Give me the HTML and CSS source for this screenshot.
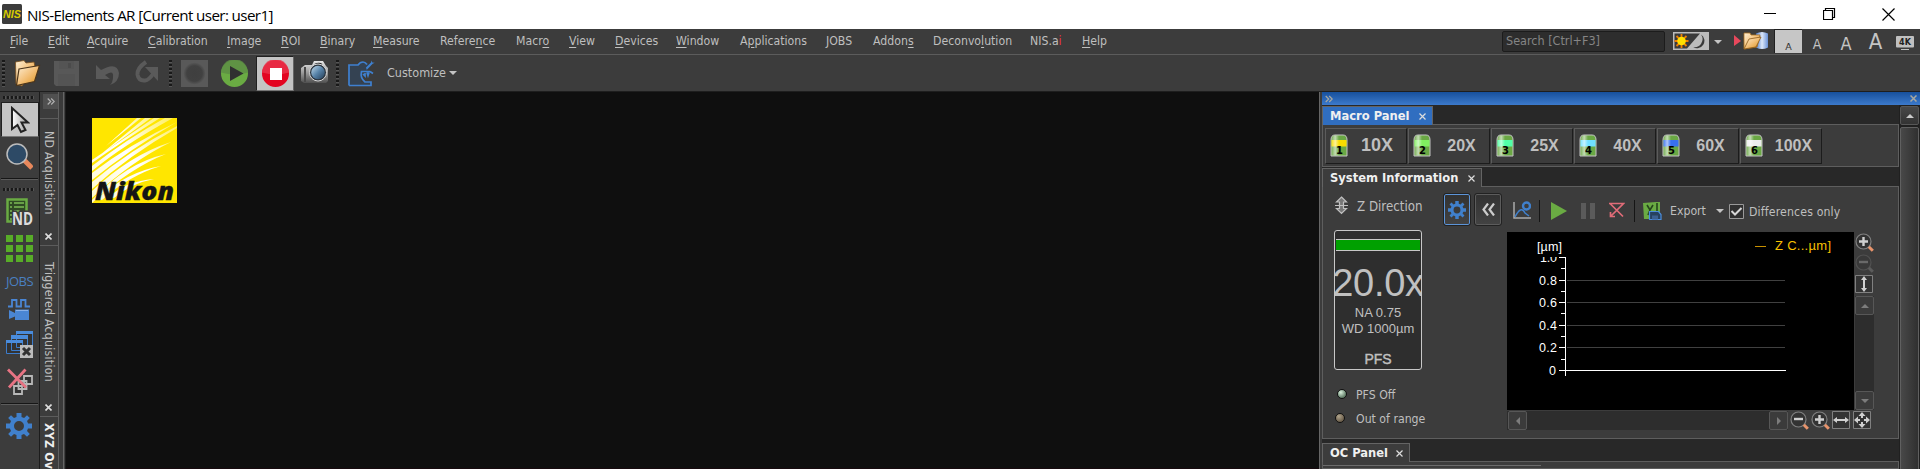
FILE: index.html
```html
<!DOCTYPE html>
<html lang="en">
<head>
<meta charset="utf-8">
<title>NIS-Elements AR</title>
<link rel="stylesheet" href="styles.css">
</head>
<body>
<svg class="defs" aria-hidden="true">
  <defs>
    <linearGradient id="gold" x1="0" y1="0" x2="1" y2="1"><stop offset="0" stop-color="#fdf0d8"/><stop offset=".5" stop-color="#f3c079"/><stop offset="1" stop-color="#dc9018"/></linearGradient>
    <linearGradient id="steel" x1="0" y1="0" x2="0" y2="1"><stop offset="0" stop-color="#e8e8e8"/><stop offset=".5" stop-color="#a0a0a0"/><stop offset="1" stop-color="#505050"/></linearGradient>
    <linearGradient id="lens" x1="0" y1="0" x2="1" y2="1"><stop offset="0" stop-color="#c4dcec"/><stop offset=".5" stop-color="#5682a8"/><stop offset="1" stop-color="#243c54"/></linearGradient>
    <linearGradient id="glass" x1="0" y1="0" x2="1" y2="0"><stop offset="0" stop-color="#fff" stop-opacity=".1"/><stop offset=".25" stop-color="#fff" stop-opacity=".6"/><stop offset=".5" stop-color="#fff" stop-opacity="0"/></linearGradient>
    <linearGradient id="arrowfill" x1="0" y1="0" x2="1" y2="0"><stop offset="0" stop-color="#fff"/><stop offset="1" stop-color="#999"/></linearGradient>
    <linearGradient id="ray" x1="1" y1="0" x2="0" y2="1"><stop offset="0" stop-color="#fff" stop-opacity=".35"/><stop offset=".5" stop-color="#fff"/><stop offset="1" stop-color="#fff" stop-opacity=".8"/></linearGradient>
    <linearGradient id="db" x1="0" y1="0" x2="1" y2="0"><stop offset="0" stop-color="#4a78c8"/><stop offset=".5" stop-color="#dce8fa"/><stop offset="1" stop-color="#6a92d8"/></linearGradient>
    <radialGradient id="dim"><stop offset="0" stop-color="#3f3f3f"/><stop offset=".7" stop-color="#414141"/><stop offset="1" stop-color="#585858"/></radialGradient>
    <symbol id="gear" viewBox="0 0 26 26"><path fill="#4080cc" fill-rule="evenodd" d="M10.5 0h5v4l2.6 1.1L21 2.3 23.8 5 21 8l1.1 2.5H26v5h-4L21 18l2.8 3-2.8 2.8-3-2.8-2.5 1.1V26h-5v-4L8 21l-3 2.8L2.2 21 5 18l-1.1-2.5H0v-5h4L5 8 2.2 5 5 2.2 8 5l2.5-1.100zM13 8a5 5 0 1 0 0 10a5 5 0 0 0 0-10z"/></symbol>
    <symbol id="bottle" viewBox="0 0 18 24"><path d="M1 6Q1 1 5 1h8q4 0 4 5v16H1z" fill="#6aa844" stroke="#c4c4c4"/><rect x="1.500" y="6" width="15" height="6.500" fill="currentColor"/><path d="M1.500 6Q2 1.500 5 1.500h8q3.500 0 3.500 4.500v15.500h-15z" fill="url(#glass)"/></symbol>
    <symbol id="zin" viewBox="0 0 19 19"><circle cx="8.500" cy="8.500" r="7.500" fill="#333" stroke="#808080" stroke-width="1.200"/><path d="M8.500 4v9M4 8.500h9" stroke="#d0d0d0" stroke-width="2.400"/><path d="M13.800 13.800l4 4" stroke="#e8946c" stroke-width="3"/></symbol>
    <symbol id="zout" viewBox="0 0 19 19"><circle cx="8.500" cy="8.500" r="7.500" fill="#333" stroke="#808080" stroke-width="1.200"/><path d="M4 8h9" stroke="#d0d0d0" stroke-width="2.400"/><path d="M13.800 13.800l4 4" stroke="#e8946c" stroke-width="3"/></symbol>
  </defs>
</svg>

<header class="titlebar">
  <svg class="app-icon" width="20" height="20"><rect width="20" height="20" rx="1.500" fill="#3c3c3c"/><text x="1" y="13.500" textLength="18" lengthAdjust="spacingAndGlyphs">NIS</text></svg>
  <span class="title">NIS-Elements AR [Current user: user1]</span>
  <div class="win-controls">
    <svg width="13" height="13"><path d="M0 5.500h12" stroke="#000"/></svg>
    <svg width="13" height="13"><path d="M.5 2.500h9v9h-9zM2.500 2.500v-2h9v9h-2" fill="none" stroke="#000" stroke-width="1.200"/></svg>
    <svg width="13" height="13"><path d="M.5.5l12 12M12.500.5l-12 12" stroke="#000" stroke-width="1.200"/></svg>
  </div>
</header>

<nav class="menubar">
  <div class="menus">
    <span><u>F</u>ile</span><span><u>E</u>dit</span><span><u>A</u>cquire</span><span><u>C</u>alibration</span><span><u>I</u>mage</span><span><u>R</u>OI</span><span><u>B</u>inary</span><span><u>M</u>easure</span><span>Refere<u>n</u>ce</span><span>Macr<u>o</u></span><span><u>V</u>iew</span><span><u>D</u>evices</span><span><u>W</u>indow</span><span>A<u>p</u>plications</span><span>JOBS</span><span>Addon<u>s</u></span><span>Deconvo<u>l</u>ution</span><span>NIS.a<b>i</b></span><span><u>H</u>elp</span>
  </div>
  <div class="menu-tools">
    <div class="search">Search [Ctrl+F3]</div>
    <svg class="theme" width="36" height="18"><path d="M0 0h36v18H0z" fill="#bcbcbc"/><path d="M1.500 1.500H27L14 16.500H1.500z" fill="#3a3a3a"/><g stroke="#f08000" stroke-width="1.800"><path d="M8.500 2v14M1.500 9h14M3.500 4l10 10M13.500 4l-10 10"/></g><circle cx="8.500" cy="9" r="4.300" fill="#ffe000"/><path d="M28 2.500a7 7 0 1 1-8 12.500a8 8 0 0 0 8-12.500z" fill="#3a3a3a"/></svg>
    <i class="caret theme-caret"></i>
    <svg class="folder-db" width="35" height="20"><path d="M0 4l7 6-7 5z" fill="#e8485c"/><path d="M22 2.500q6-3 12 0v14q-6 3-12 0z" fill="url(#db)"/><path d="M10 2h6l1 2h9l-3 12-13 2z" fill="url(#gold)" stroke="#a87020" stroke-width=".8"/><path d="M15 8l12-2-5 10-12 2z" fill="url(#gold)" stroke="#8a5818" stroke-width=".8"/></svg>
    <div class="size-on"><span>A</span></div>
    <span class="size s2">A</span><span class="size s3">A</span><span class="size s4">A</span>
    <svg class="k4" width="18" height="14"><rect width="18" height="11.500" rx="1" fill="#c0c0c0"/><path d="M5 13.500h8" stroke="#c0c0c0"/><text x="3" y="9" textLength="12">4K</text></svg>
  </div>
</nav>

<div class="toolbar">
  <i class="grip-v"></i>
  <svg width="27" height="27"><path d="M1.500 2L10 .5l2 2.500 8-1 1 5L8 26l-6-2z" fill="url(#gold)" stroke="#7a5020" stroke-width=".8"/><path d="M5 9l20.500-3.500-5 16L2.500 25.500z" fill="url(#gold)" stroke="#4c351a" stroke-width="1.200"/></svg>
  <svg width="27" height="27"><path d="M0 1h25v25H2l-2-2z" fill="#585858"/><path d="M5 1h15v8H5zM4 14h17v12H4z" fill="#545454"/><path d="M14 3h3v5h-3z" fill="#4b4b4b"/></svg>
  <svg width="27" height="27"><path d="M2 5v14h14l-5-4q9-6 8 2 0 5-3 8 9-3 9-12Q23 1 7 10z" fill="#5a5a5a"/></svg>
  <svg width="27" height="27"><path d="M12 2Q3 8 3.500 14.500 4.500 21 11 20.500 15 20 19 14" fill="none" stroke="#5a5a5a" stroke-width="4"/><path d="M11 7h13v14z" fill="#5a5a5a"/></svg>
  <i class="grip-v g2"></i>
  <svg class="after-grip" width="27" height="27"><path d="M0 0h27v27H0z" fill="#595959"/><circle cx="13.500" cy="13.500" r="11" fill="url(#dim)"/></svg>
  <svg width="27" height="27"><circle cx="13.500" cy="13.500" r="13.500" fill="#6aab43"/><path d="M0 12.500a13.500 13.500 0 0 1 27 0q-13 4-27 0z" fill="#5c8d45" opacity=".8"/><path d="M9 6l13.500 7.500L9 21z" fill="#303030"/></svg>
  <div class="stop-btn"><svg width="27" height="27"><circle cx="13.500" cy="13.500" r="13.500" fill="#e30420"/><path d="M0 12.500a13.500 13.500 0 0 1 27 0q-13 4-27 0z" fill="#e8344c" opacity=".8"/><rect x="8" y="8" width="12" height="12" fill="#fff"/></svg></div>
  <svg class="camera" width="27" height="27"><path d="M0 8l4-3h7l2-4h9l3 5 2 2v13l-2 2H3l-3-2z" fill="url(#steel)"/><path d="M4 7v15" stroke="#4a4a4a" stroke-width="2"/><path d="M14 4.500q4-2 7 0" stroke="#222" fill="none" stroke-width="1.500"/><circle cx="17" cy="12.500" r="8.500" fill="#2c3640" stroke="#d8d8d8"/><circle cx="17" cy="12.500" r="6.800" fill="url(#lens)"/></svg>
  <i class="grip-v g2"></i>
  <svg class="after-grip" width="27" height="27"><path d="M1 25.500V5h9l4-3h4l5 4-4 5-6 1.500V22l10 1v2.500z" fill="#344252"/><path d="M1 25.500V5h9q2-3 5-3 2 0 4 2.500M1 25.500h22v-3.500h-6q-5-4-3.500-10.500H22M15 14l2 2v-3M19 12.500l1 3 1-3M22 11.500l3 2" fill="none" stroke="#3f80d0" stroke-width="1.700"/><path d="M18 7.500l5-5 .5-2 .8 2 2.400.3-2 1-6 6z" fill="#3f80d0"/></svg>
  <span class="customize">Customize</span><i class="caret"></i>
</div>

<main class="workspace">
  <aside class="tools">
    <i class="grip-h"></i>
    <div class="pointer"><svg width="20" height="28"><path d="M2 2v21l5.500-4 3.500 7 4.500-2-4-7.500h6.500z" fill="url(#arrowfill)" stroke="#222" stroke-width="2"/></svg></div>
    <svg class="mag" width="27" height="27"><path d="M18 17l8 8" stroke="#e8885c" stroke-width="5"/><circle cx="11" cy="11" r="10" fill="#2d4a66" stroke="#bcbcbc" stroke-width="1.500"/></svg>
    <i class="rule"></i>
    <i class="grip-h second"></i>
    <div class="tool-list">
      <svg class="nd-icon" width="27" height="27"><path d="M1.500 1.500h19v22h-19z" fill="#2f4a24" stroke="#6aab43" stroke-width="2.500"/><path d="M4 5h2M8 5h10M4 9h2M8 9h10M4 13h2M8 13h6M4 17h2M4 21h2" stroke="#7cbc54" stroke-width="1.500"/><text class="nd" x="6" y="26.500" textLength="21" lengthAdjust="spacingAndGlyphs">ND</text></svg>
      <svg width="27" height="27"><path d="M0 0h7v7H0zM10 0h7v7h-7zM20 0h7v7h-7zM0 10h7v7H0zM10 10h7v7h-7zM20 10h7v7h-7zM0 20h7v7H0zM10 20h7v7h-7zM20 20h7v7h-7z" fill="#58ac28"/></svg>
      <span class="jobs">JOBS</span>
      <svg width="27" height="22"><path d="M2 7.500h4V1h4.500v6.500H15V1h4.500v6.500H24" fill="none" stroke="#4a86d4" stroke-width="1.800"/><path d="M3 11l6 3v-3.500h14V21H9v-3.500L3 20z" fill="#4a86d4"/><path d="M10 11.500h12" stroke="#88b0e8"/></svg>
      <svg width="27" height="27"><g fill="#333" stroke="#3c7ccc"><path d="M10.500.5h16v16h-16zM5.500 4.500h16v15h-16zM.5 9.500h16v13H.5z"/></g><path d="M10 0h17v3H10zM5 4h17v4H5zM0 9h17v3H0z" fill="#4a8cdc"/><rect x="14" y="14" width="13" height="13" fill="#bcbcbc"/><path d="M17 17l7 7M24 17l-7 7" stroke="#333" stroke-width="3"/></svg>
      <svg width="27" height="27"><g fill="#333" stroke="#b8b8b8" stroke-width="1.800"><path d="M18 8h8v8h-8zM12.500 13h8v8h-8zM8 18h8v8H8z"/></g><path d="M2 1.500l18 18M19.500 1.500L3 19.500" stroke="#e87484" stroke-width="2.800"/></svg>
    </div>
    <i class="rule"></i>
    <svg class="gear" width="26" height="26"><use href="#gear"/></svg>
  </aside>

  <aside class="side-tabs">
    <div class="expand"><svg width="8" height="7"><path d="M.7.5l3 3-3 3M4.200.5l3 3-3 3" fill="none" stroke="#b0b0b0" stroke-width="1.200"/></svg></div>
    <div class="vtab nd-tab"><span>ND Acquisition</span><svg width="7" height="7"><path d="M.5.5l6 6M6.500.5l-6 6" stroke="#ddd" stroke-width="1.600"/></svg></div>
    <div class="vtab trig-tab"><span>Triggered Acquisition</span><svg width="7" height="7"><path d="M.5.5l6 6M6.500.5l-6 6" stroke="#ddd" stroke-width="1.600"/></svg></div>
    <div class="vtab active"><span>XYZ Overview</span></div>
  </aside>

  <section class="canvas">
    <svg class="nikon" width="85" height="85" viewBox="0 0 85 85">
      <path d="M0 0h85v85H0z" fill="#ffe600"/>
      <g fill="url(#ray)"><path d="M45 0h4L14 28zM53 0h6L8 37zM62 0h6Q28 25 0 45v-3Q30 22 62 0zM73 0h8Q30 28 0 53v-5Q35 21 73 0zM85 4Q38 31 0 62v-7Q38 26 85 4zM85 8v2Q36 38 0 71v-7Q38 32 85 8zM79 24Q38 44 0 80v-7Q38 37 79 24zM74 36Q38 50 0 85v-3Q34 45 74 36zM69 48Q38 57 10 82l-5-1Q34 54 69 48zM62 61Q40 65 22 80l-5-1Q34 63 62 61z"/></g>
      <text x="3" y="81.500" textLength="79" lengthAdjust="spacingAndGlyphs">Nikon</text>
    </svg>
  </section>

  <section class="dock">
    <div class="dock-title"><svg width="8" height="8"><path d="M.7 1l3 3-3 3M4.200 1l3 3-3 3" fill="none" stroke="#a8a8a0" stroke-width="1.200"/></svg><svg width="7" height="7"><path d="M.5.5l6 6M6.500.5l-6 6" stroke="#a8a8a0" stroke-width="1.500"/></svg></div>
    <div class="dock-body">
      <div class="panels">
        <div class="tab macro-tab"><span>Macro Panel</span><svg width="7" height="7"><path d="M.5.5l6 6M6.500.5l-6 6" stroke="#ddd" stroke-width="1.200"/></svg></div>
        <div class="panel macros">
          <div class="macro big"><svg class="m1" width="18" height="24"><use href="#bottle"/><text x="6" y="20">1</text></svg><span>10X</span></div>
          <div class="macro"><svg class="m2" width="18" height="24"><use href="#bottle"/><text x="6" y="20">2</text></svg><span>20X</span></div>
          <div class="macro"><svg class="m3" width="18" height="24"><use href="#bottle"/><text x="6" y="20">3</text></svg><span>25X</span></div>
          <div class="macro"><svg class="m4" width="18" height="24"><use href="#bottle"/><text x="6" y="20">4</text></svg><span>40X</span></div>
          <div class="macro"><svg class="m5" width="18" height="24"><use href="#bottle"/><text x="6" y="20">5</text></svg><span>60X</span></div>
          <div class="macro"><svg class="m6" width="18" height="24"><use href="#bottle"/><text x="6" y="20">6</text></svg><span>100X</span></div>
        </div>
        <div class="tab sys-tab"><span>System Information</span><svg width="7" height="7"><path d="M.5.5l6 6M6.500.5l-6 6" stroke="#ddd" stroke-width="1.200"/></svg></div>
        <div class="panel system">
          <div class="sys-head">
            <div class="zdir"><svg width="13" height="19"><path d="M6.500 1l5 5h-3v6.500h3l-5 5-5-5h3V6h-3z" fill="#777" stroke="#c0c0c0" stroke-width="1.200"/><path d="M0 9.500h13" stroke="#c0c0c0"/></svg><span>Z Direction</span></div>
            <div class="sq-btn on"><svg width="18" height="18"><use href="#gear"/></svg></div>
            <div class="sq-btn"><svg width="13" height="13"><path d="M6 .5L1.500 6.500 6 12.500M12 .5L7.500 6.500 12 12.500" fill="none" stroke="#ccc" stroke-width="2.200"/></svg></div>
            <svg class="chart-ic" width="18" height="19"><path d="M1 1v16h17" fill="none" stroke="#aaa" stroke-width="1.500"/><path d="M2 16q6-12 10-4l4 3" fill="none" stroke="#4080cc" stroke-width="1.500"/><circle cx="13.500" cy="5" r="3.500" fill="none" stroke="#4080cc" stroke-width="2.400"/></svg>
            <i class="vsep"></i>
            <svg class="play-ic" width="16" height="18"><path d="M0 0l16 9-16 9z" fill="#6aab43"/></svg>
            <svg class="pause-ic" width="14" height="16"><path d="M0 0h5v16H0zM9 0h5v16H9z" fill="#5b5b5b"/></svg>
            <svg class="clear-ic" width="16" height="16"><path d="M0 1.500h14.500L1.500 14.500M1 1.500l13 13M1.500 10v4.500H6" fill="none" stroke="#e06c78" stroke-width="1.700"/></svg>
            <i class="vsep last"></i>
            <svg class="xls" width="19" height="19"><path d="M0 1l13-1h4v17H1z" fill="#6aab43"/><path d="M4 3l3 5 3-5M7 8l-2 5M14 1v8" stroke="#25451c" fill="none" stroke-width="1.600"/><path d="M6.500 9.500h9l2.500 3v5H6.500z" fill="#27425f" stroke="#4a8cdc" stroke-width="1.200"/><path d="M9 13.500h6v4H9z" fill="#3c6090"/></svg>
            <span class="export">Export</span><i class="caret exp-caret"></i>
            <svg class="check" width="15" height="15"><path d="M.5.5h14v14H.5z" fill="#303030" stroke="#999"/><path d="M2.500 7l3.500 3.500L12.500 4" fill="none" stroke="#d8d8d8" stroke-width="2"/></svg>
            <span class="diff">Differences only</span>
          </div>
          <div class="sys-body">
            <div class="left">
              <div class="objective"><div class="ring"></div><div class="mag-value">20.0x</div><div class="na">NA 0.75</div><div class="wd">WD 1000µm</div><div class="pfs">PFS</div></div>
              <div class="status"><i class="led green"></i><span>PFS Off</span></div>
              <div class="status"><i class="led amber"></i><span>Out of range</span></div>
            </div>
            <div class="graph-area">
              <div class="graph-row">
                <svg class="graph" width="347" height="178">
                  <path d="M60 48.500h218M60 70.500h218M60 93.500h218M60 115.500h218" stroke="#404040"/>
                  <path d="M58.500 25v119M52 25.500h6M54 36.500h4M52 48.500h6M54 59.500h4M52 70.500h6M54 81.500h4M52 93.500h6M54 104.500h4M52 115.500h6M54 127.500h4M52 138.500h227" fill="none" stroke="#fff"/>
                  <text x="30" y="19" textLength="25">[µm]</text>
                  <svg x="0" y="25" width="52" height="10"><text x="33" y="5" textLength="17">1.0</text></svg>
                  <text x="32" y="53" textLength="18">0.8</text><text x="32" y="75" textLength="18">0.6</text><text x="32" y="98" textLength="18">0.4</text><text x="32" y="120" textLength="18">0.2</text><text x="42" y="143">0</text>
                  <path d="M248 14.500h11" stroke="#c89000"/><text class="legend" x="268" y="18" textLength="56">Z C...µm]</text>
                </svg>
                <div class="v-tools">
                  <svg width="19" height="19"><use href="#zin"/></svg>
                  <svg class="off" width="19" height="19"><use href="#zout"/></svg>
                  <svg width="18" height="18"><path d="M.5.5h17v17H.5z" fill="#333" stroke="#808080"/><path d="M9 1l3 4h-2v8h2l-3 4-3-4h2V5H6z" fill="#d0d0d0"/></svg>
                  <div class="vscroll"><div class="sbtn"><i class="up"></i></div><div class="sbtn"><i class="down"></i></div></div>
                </div>
              </div>
              <div class="h-tools">
                <div class="hscroll"><div class="sbtn"><i class="lt"></i></div><div class="sbtn"><i class="rt"></i></div></div>
                <svg width="19" height="19"><use href="#zout"/></svg>
                <svg width="19" height="19"><use href="#zin"/></svg>
                <svg width="18" height="18"><path d="M.5.5h17v17H.5z" fill="#333" stroke="#808080"/><path d="M1 9l4-3v2h8V6l4 3-4 3v-2H5v2z" fill="#d0d0d0"/></svg>
                <svg class="fit" width="18" height="18"><path d="M.5.5h17v17H.5z" fill="#333" stroke="#808080"/><path d="M9 1l3.500 4h-7zM9 17l3.500-4h-7zM1 9l4-3.500v7zM17 9l-4-3.500v7z" fill="#d0d0d0"/><path d="M9 4v3M9 11v3M4 9h3M11 9h3" stroke="#d0d0d0" stroke-width="2"/></svg>
              </div>
            </div>
          </div>
        </div>
        <div class="tab oc-tab"><span>OC Panel</span><svg width="7" height="7"><path d="M.5.5l6 6M6.500.5l-6 6" stroke="#ddd" stroke-width="1.200"/></svg></div>
        <div class="panel oc"><i></i></div>
      </div>
      <div class="dock-scroll"><div class="sbtn"><i class="up"></i></div><div class="thumb"></div></div>
    </div>
  </section>
</main>
</body>
</html>
```
FILE: styles.css
```css
* { box-sizing: border-box; }
body { margin: 0; width: 1920px; height: 469px; overflow: hidden; display: flex; flex-direction: column; background: #3c3c3c; color: #bfbfbf; font: 12.2px/16px "DejaVu Sans Condensed", "DejaVu Sans", sans-serif; font-stretch: condensed; white-space: nowrap; }
svg { display: block; flex: none; }
i { display: block; flex: none; }
.defs { width: 0; height: 0; position: absolute; }

.titlebar { height: 29px; flex: none; background: #fff; color: #000; display: flex; align-items: center; padding-left: 2px; }
.app-icon { margin-top: -1px; }
.app-icon text { font: italic bold 10px "Liberation Sans", sans-serif; fill: #d8cc00; }
.title { margin-left: 5px; font: 15.2px/20px "Open Sans", sans-serif; letter-spacing: -.62px; }
.win-controls { margin-left: auto; display: flex; gap: 46px; padding-right: 25px; }

.menubar { height: 26px; flex: none; display: flex; border-bottom: 1px solid #5c5c5c; }
.menus { display: grid; grid-template-columns: 38px 39px 61px 79px 54px 39px 53px 67px 76px 53px 46px 61px 64px 86px 47px 60px 97px 52px 60px; padding: 4px 0 0 10px; }
.menus u { text-underline-offset: 2px; }
.menus b { color: #f03040; font-weight: normal; }
.menu-tools { margin-left: auto; display: flex; padding-right: 6px; }
.search { width: 163px; height: 21px; margin: 2px 8px 0 0; padding: 1px 3px; background: #2d2d2d; border: 1px solid #1c1c1c; border-radius: 2px; color: #858585; font-size: 12.500px; }
.theme { margin-top: 3px; }
.caret { border: 4px solid transparent; border-top-color: #c4c4c4; border-bottom: 0; width: 8px; height: 4px; }
.theme-caret { margin: 11px 0 0 5px; }
.folder-db { margin: 2px 5px 0 12px; }
.size-on { width: 28px; height: 24px; background: #c6c6c6; border: 1px solid #202020; border-width: 1px 0 0 1px; color: #303030; font: 9.500px/10px "DejaVu Sans", sans-serif; display: flex; align-items: flex-end; justify-content: center; padding-bottom: 1px; }
.size { height: 26px; font-family: "DejaVu Sans", sans-serif; color: #c4c4c4; text-align: center; }
.s2 { font-size: 14px; line-height: 31px; margin-left: 9px; width: 12px; }
.s3 { font-size: 18px; line-height: 29px; margin-left: 16px; width: 14px; }
.s4 { font-size: 22px; line-height: 26px; margin-left: 14px; width: 17px; }
.k4 { margin: 7px 0 0 12px; }
.k4 text { font: bold 8px "DejaVu Sans", sans-serif; fill: #222; }

.toolbar { height: 37px; flex: none; display: flex; align-items: center; gap: 13px; padding-left: 2px; border-bottom: 1px solid #1e1e1e; }
.grip-v { width: 3px; height: 27px; margin-right: -4px; background: repeating-linear-gradient(#191919 0 2px, #555 2px 3px, #3c3c3c 3px 4px); }
.g2 { margin: 0 -4px 0 -5px; }
.stop-btn { width: 38px; height: 35px; margin: 0 -7px 0 -5px; background: #c4c4c4; border: 1px solid #202020; border-right-color: #666; border-bottom-color: #777; display: flex; align-items: center; justify-content: center; }
.camera { margin-left: 1px; }
.customize { margin: 0 -10px 0 -1px; font-size: 12.500px; }

.workspace { flex: 1; min-height: 0; display: flex; }
.tools { width: 40px; border-right: 1px solid #1c1c1c; padding-top: 4px; display: flex; flex-direction: column; flex: none; }
.grip-h { width: 31px; height: 3px; margin-left: 3px; background: repeating-linear-gradient(90deg, #191919 0 2px, #555 2px 3px, #3c3c3c 3px 4px); }
.pointer { width: 38px; height: 35px; margin: 3px 0 0 1px; background: #c4c4c4; border: 1px solid #202020; border-bottom-color: #777; display: flex; align-items: center; justify-content: center; }
.mag { margin: 6px 0 8px 6px; }
.rule { width: 37px; height: 2px; margin-left: 1px; background: #161616; border-bottom: 1px solid #5c5c5c; }
.second { margin-top: 8px; }
.tool-list { display: flex; flex-direction: column; gap: 10px; margin: 7px 0 8px 6px; }
.nd-icon, .nikon { overflow: visible; }
.nd { font: bold 17px "Open Sans", sans-serif; fill: #ddd; stroke: #3c3c3c; stroke-width: 3px; paint-order: stroke; }
.jobs { height: 17px; font: 13px/18px "Open Sans", sans-serif; color: #4a80c0; letter-spacing: -.5px; }
.gear { margin: 8px 0 0 6px; }

.side-tabs { width: 26px; flex: none; display: flex; flex-direction: column; background: linear-gradient(90deg, #3c3c3c 18px, #606060 18px 19px, #3a3a3a 19px 23px, #666 23px 24px, #1c1c1c 25px); overflow: hidden; }
.expand { width: 15px; height: 15px; flex: none; margin: 2px 0 9px 3px; background: #505050; display: flex; align-items: center; justify-content: center; }
.vtab { width: 19px; flex: none; border-top: 1px solid #5c5c5c; display: flex; flex-direction: column; align-items: center; justify-content: space-between; }
.vtab span { writing-mode: vertical-rl; line-height: 19px; letter-spacing: .25px; margin-right: 3px; }
.nd-tab { height: 127px; padding: 12px 0 5px; }
.trig-tab { height: 171px; padding: 16px 0 5px; }
.vtab svg { margin-right: 2px; }
.active { color: #eee; font-weight: bold; padding-top: 6px; }

.canvas { flex: 1; background: #0f0f0f; padding: 26px; border-bottom: 1px solid #170a0e; }
.nikon text { font: italic 800 25px "Open Sans", sans-serif; fill: #151515; stroke: #151515; stroke-width: .3px; }

.dock { width: 601px; flex: none; border-left: 1px solid #666; padding-left: 2px; display: flex; flex-direction: column; }
.dock-title { height: 13px; flex: none; display: flex; justify-content: space-between; align-items: center; padding: 0 3px; background: linear-gradient(#17509c, #3c7acc); }
.dock-body { flex: 1; min-height: 0; display: flex; background: #282828; }
.panels { width: 577px; flex: none; display: flex; flex-direction: column; }
.tab { height: 19px; flex: none; margin: 1px 0 -1px; z-index: 1; display: flex; align-items: center; justify-content: space-between; align-self: flex-start; padding: 0 6px 0 7px; background: #3c3c3c; border: 1px solid #646464; border-bottom: 0; color: #f0f0f0; font-weight: bold; font-size: 12.8px; line-height: 18px; }
.macro-tab { width: 111px; background: #306ec0; }
.sys-tab { width: 160px; }
.oc-tab { width: 88px; margin-top: 4px; }
.panel { background: #3c3c3c; border: 1px solid #5e5e5e; flex: none; }
.macros { height: 43px; display: flex; padding: 3px 2px; gap: 1px; }
.macro { width: 82px; height: 36px; border: 1px solid #5c5c5c; border-right-color: #1c1c1c; border-bottom-color: #1c1c1c; display: flex; align-items: center; padding: 0 0 1px 4px; font: bold 16px "Liberation Sans", sans-serif; }
.macro span { flex: 1; text-align: center; padding-left: 3px; }
.macro text { font: bold 10px "DejaVu Sans", sans-serif; fill: #000; }
.big { font-size: 18px; }
.big span { padding-left: 0; }
.m1 { color: #f8dc00; } .m2 { color: #80f060; } .m3 { color: #50ffa8; } .m4 { color: #70e0ff; } .m5 { color: #3870f0; } .m6 { color: #ececec; }
.system { height: 253px; }
.sys-head { height: 43px; display: flex; padding: 7px 0 0 12px; }
.zdir { width: 109px; display: flex; gap: 9px; font-size: 13.2px; padding-top: 2px; }
.zdir span { margin-top: 3px; }
.sq-btn { width: 26px; height: 31px; border: 1px solid #5c5c5c; outline: 1px solid #222; border-radius: 2px; margin-right: 5px; background: linear-gradient(#323232, #424242); display: flex; align-items: center; justify-content: center; }
.on { border-color: #5c94d8; }
.chart-ic { margin: 7px 0 0 7px; }
.vsep { width: 1px; height: 22px; background: #151515; margin: 6px 0 0 8px; }
.last { margin-left: 9px; }
.play-ic { margin: 8px 0 0 11px; }
.pause-ic { margin: 9px 0 0 14px; }
.clear-ic { margin: 8px 0 0 14px; }
.xls { margin: 8px 0 0 8px; }
.export { width: 36px; margin: 9px 0 0 8px; }
.exp-caret { margin: 15px 0 0 10px; }
.check { margin: 10px 5px 0; }
.diff { margin-top: 10px; letter-spacing: .15px; }
.sys-body { display: flex; }
.left { width: 184px; padding-left: 11px; }
.objective { width: 88px; height: 140px; margin-bottom: 13px; border: 1px solid #c8c8c8; border-radius: 3px; background: #2e2e2e; display: flex; flex-direction: column; align-items: center; overflow: hidden; padding-top: 8px; font: 14px/16px "Liberation Sans", sans-serif; color: #c0c0c0; }
.ring { width: 84px; height: 12px; flex: none; background: #00a000; border: 1px solid #c8c8c8; border-width: 1px 0; }
.mag-value { font-size: 38px; line-height: 42px; margin-top: 11px; letter-spacing: -.3px; }
.na { font-size: 13px; margin-top: 1px; }
.wd { font-size: 13px; }
.pfs { font-size: 14px; margin-top: 14px; -webkit-text-stroke: .4px #c0c0c0; }
.status { display: flex; align-items: center; height: 24px; padding-left: 3px; gap: 9px; }
.status + .status { padding-left: 1px; gap: 11px; }
.led { width: 10px; height: 10px; border-radius: 50%; border: 1px solid #111; margin-top: -3px; }
.green { background: radial-gradient(circle at 35% 30%, #d8f0dc, #607c66 70%); }
.amber { background: radial-gradient(circle at 35% 30%, #b0a48c, #6c5f4c 70%); }
.graph-area { padding-top: 2px; }
.graph-row { display: flex; }
.graph { background: #000; }
.graph text { font: 12.500px "Liberation Sans", sans-serif; fill: #fff; }
.graph .legend { fill: #f8c000; font-size: 13px; }
.v-tools { margin-left: 1px; display: flex; flex-direction: column; gap: 2px; height: 178px; padding-top: 1px; }
.off { opacity: .3; filter: grayscale(1); }
.vscroll { flex: 1; margin-top: 1px; width: 19px; background: #2d2d2d; display: flex; flex-direction: column; justify-content: space-between; }
.sbtn { width: 19px; height: 19px; flex: none; background: #3b3b3b; border: 1px solid #575757; border-radius: 2px; display: flex; align-items: center; justify-content: center; }
.sbtn i { border: 4px solid transparent; }
.sbtn .up { border-top: 0; border-bottom-color: #7c7c7c; }
.sbtn .down { border-bottom: 0; border-top-color: #7c7c7c; }
.sbtn .lt { border-left: 0; border-right-color: #7c7c7c; }
.sbtn .rt { border-right: 0; border-left-color: #7c7c7c; }
.h-tools { display: flex; gap: 2px; padding-top: 1px; }
.hscroll { width: 281px; height: 19px; background: #2d2d2d; display: flex; justify-content: space-between; padding-left: 1px; }
.fit { margin-left: 1px; }
.oc { flex: 1; padding-top: 3px; }
.oc i { width: 218px; height: 1px; background: #6c6c6c; }
.dock-scroll { width: 21px; padding: 1px 1px 0; background: #202020; }
.dock-scroll .sbtn { background: linear-gradient(#484848, #333); }
.dock-scroll .up { border-bottom-color: #ccc; }
.thumb { width: 19px; height: 350px; margin-top: 2px; border: 1px solid #606060; border-radius: 2px; background: linear-gradient(90deg, #484848, #303030); }
```
